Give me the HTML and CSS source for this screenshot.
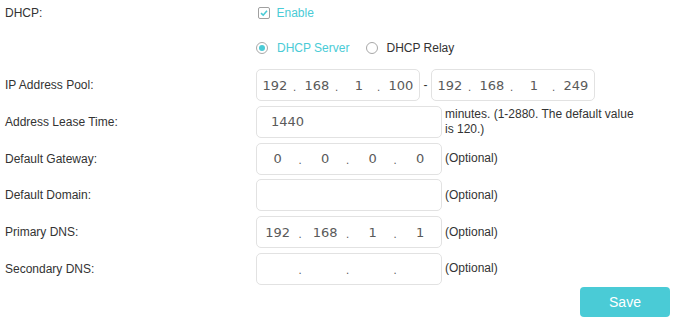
FILE: index.html
```html
<!DOCTYPE html>
<html>
<head>
<meta charset="utf-8">
<link rel="stylesheet" href="styles.css">
</head>
<body>
<div class="form">
  <div class="row row-check">
    <div class="label">DHCP:</div>
    <span class="checkbox"><svg width="10" height="10" viewBox="0 0 10 10"><path d="M2 5.2 L4.2 7.2 L8 2.8" fill="none" stroke="#4acbd6" stroke-width="1.6"/></svg></span>
    <span class="opt-on">Enable</span>
  </div>
  <div class="row row-radio">
    <div class="label"></div>
    <span class="radio checked"></span>
    <span class="opt-on">DHCP Server</span>
    <span class="radio second"></span>
    <span class="opt">DHCP Relay</span>
  </div>
  <div class="row row-field first">
    <div class="label">IP Address Pool:</div>
    <div class="box ip short">
      <span class="seg">192</span><span class="dot">.</span><span class="seg">168</span><span class="dot">.</span><span class="seg">1</span><span class="dot">.</span><span class="seg">100</span>
    </div>
    <span class="sep">-</span>
    <div class="box ip short">
      <span class="seg">192</span><span class="dot">.</span><span class="seg">168</span><span class="dot">.</span><span class="seg">1</span><span class="dot">.</span><span class="seg">249</span>
    </div>
  </div>
  <div class="row row-field">
    <div class="label">Address Lease Time:</div>
    <div class="box text">1440</div>
    <div class="hint wide">minutes. (1-2880. The default value is 120.)</div>
  </div>
  <div class="row row-field">
    <div class="label">Default Gateway:</div>
    <div class="box ip">
      <span class="seg">0</span><span class="dot">.</span><span class="seg">0</span><span class="dot">.</span><span class="seg">0</span><span class="dot">.</span><span class="seg">0</span>
    </div>
    <div class="hint">(Optional)</div>
  </div>
  <div class="row row-field">
    <div class="label">Default Domain:</div>
    <div class="box text"></div>
    <div class="hint">(Optional)</div>
  </div>
  <div class="row row-field">
    <div class="label">Primary DNS:</div>
    <div class="box ip">
      <span class="seg">192</span><span class="dot">.</span><span class="seg">168</span><span class="dot">.</span><span class="seg">1</span><span class="dot">.</span><span class="seg">1</span>
    </div>
    <div class="hint">(Optional)</div>
  </div>
  <div class="row row-field">
    <div class="label">Secondary DNS:</div>
    <div class="box ip">
      <span class="seg"></span><span class="dot">.</span><span class="seg"></span><span class="dot">.</span><span class="seg"></span><span class="dot">.</span><span class="seg"></span>
    </div>
    <div class="hint">(Optional)</div>
  </div>
  <div class="actions">
    <button class="save">Save</button>
  </div>
</div>
</body>
</html>
```
FILE: styles.css
```css
body {
  margin: 0;
  background: #fff;
  font-family: "Liberation Sans", Arial, sans-serif;
  font-size: 12px;
  color: #333;
}
.form {
  width: 665px;
  padding-left: 5px;
}
.row {
  display: flex;
  align-items: center;
}
.label {
  width: 251px;
  flex: none;
}
.row-check {
  height: 26px;
}
.row-radio {
  height: 26px;
  margin-top: 9px;
}
.row-field {
  height: 32px;
  margin-top: 4.8px;
}
.row-field.first {
  margin-top: 8px;
}
.checkbox {
  width: 12px;
  height: 12px;
  box-sizing: border-box;
  border: 1px solid #a0a0a0;
  border-radius: 2px;
  margin-left: 1.5px;
  margin-right: 7px;
  display: flex;
  align-items: center;
  justify-content: center;
}
.checkbox svg {
  display: block;
}
.opt-on {
  color: #4acbd6;
}
.opt {
  color: #333;
}
.radio {
  width: 12px;
  height: 12px;
  box-sizing: border-box;
  border: 1px solid #a8a8a8;
  border-radius: 50%;
  margin-right: 9px;
  display: flex;
  align-items: center;
  justify-content: center;
}
.radio.checked::after {
  content: "";
  width: 6px;
  height: 6px;
  border-radius: 50%;
  background: #4acbd6;
}
.radio.second {
  margin-left: 17px;
  margin-right: 8px;
}
.box {
  box-sizing: border-box;
  height: 32px;
  width: 186px;
  border: 1px solid #e2e2e2;
  border-radius: 5px;
  font-family: "DejaVu Sans", Verdana, sans-serif;
  font-size: 13px;
  color: #5a5a5a;
  flex: none;
}
.box.short {
  width: 164px;
}
.box.text {
  padding-left: 14px;
  line-height: 30px;
}
.box.ip {
  display: flex;
  align-items: center;
}
.seg {
  flex: 1;
  text-align: center;
}
.dot {
  width: 6px;
  text-align: left;
  color: #555;
  font-size: 10px;
  padding-top: 4px;
}
.sep {
  width: 11px;
  text-align: center;
  color: #333;
}
.hint {
  margin-left: 3px;
  line-height: 15px;
}
.hint.wide {
  width: 198px;
}
.actions {
  display: flex;
  justify-content: flex-end;
  margin-top: 2px;
}
.save {
  width: 90px;
  height: 30px;
  border: none;
  border-radius: 4px;
  background: #4acbd6;
  color: #fff;
  font-family: "Liberation Sans", Arial, sans-serif;
  font-size: 14px;
  padding: 0;
}
```
